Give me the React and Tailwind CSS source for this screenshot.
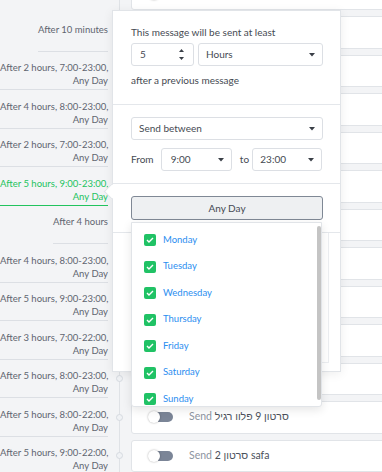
import React from "react";

// only the last two cards show their titles, the rest sit under the popover
const rows = [
  { label: [] },
  { label: ["After 10 minutes"] },
  { label: ["After 2 hours, 7:00-23:00,", "Any Day"] },
  { label: ["After 4 hours, 8:00-23:00,", "Any Day"] },
  { label: ["After 2 hours, 7:00-23:00,", "Any Day"] },
  { label: ["After 5 hours, 9:00-23:00,", "Any Day"], active: true },
  { label: ["After 4 hours"] },
  { label: ["After 4 hours, 8:00-23:00,", "Any Day"] },
  { label: ["After 5 hours, 9:00-23:00,", "Any Day"] },
  { label: ["After 3 hours, 7:00-22:00,", "Any Day"] },
  { label: ["After 5 hours, 8:00-23:00,", "Any Day"] },
  { label: ["After 5 hours, 8:00-22:00,", "Any Day"], title: "סרטון 9 פלוו רגיל" },
  { label: ["After 5 hours, 9:00-22:00,", "Any Day"], title: "סרטון 2 safa" },
];

const days = ["Monday", "Tuesday", "Wednesday", "Thursday", "Friday", "Saturday", "Sunday"];

const Caret = () => (
  <svg width="6" height="4" viewBox="0 0 6 4" className="shrink-0">
    <path d="M0 0h6L3 3.5z" fill="#3a3f47" />
  </svg>
);

const Select = ({ value, className }) => (
  <div
    className={`flex h-[23px] items-center justify-between rounded-[3px] border border-[#dcdfe4] bg-white pl-[7px] pr-[7px] ${className}`}
  >
    <span>{value}</span>
    <Caret />
  </div>
);

const Toggle = () => (
  <div className="relative h-[12px] w-[25px]">
    <div className="absolute left-[4px] top-[1px] h-[10px] w-[21px] rounded-full bg-[#7b8597]" />
    <div className="absolute left-0 top-0 h-[12px] w-[12px] rounded-full bg-white shadow-[0_0_2px_rgba(0,0,0,0.35)]" />
  </div>
);

const Row = ({ label, title, active }) => {
  const twoLines = label.length > 1;
  return (
    <div className="flex h-[38.5px]">
      <div className="flex w-[110px] shrink-0 justify-end pr-[2px] pt-[9.5px]">
        {label.length > 0 && (
          <div
            className={`whitespace-nowrap border-b pb-[2px] text-right text-[9.5px] leading-[13px] ${
              twoLines ? "w-full" : ""
            } ${active ? "border-[#22c35e] text-[#22c35e]" : "border-[#dcdfe4] text-[#5f6570]"}`}
          >
            {label.map((l, i) => (
              <div key={i}>{l}</div>
            ))}
          </div>
        )}
      </div>
      <div className="relative flex w-[19px] shrink-0 items-center justify-center">
        <div className="absolute inset-y-0 left-[9px] w-px bg-[#dfe2e6]" />
        <div className="relative h-[7px] w-[7px] rounded-full border border-[#d6dae0] bg-[#f0f2f5]" />
      </div>
      <div className="py-[3px] pl-[2px]">
        <div className="flex h-full w-[290px] items-center gap-[16px] rounded-[3px] border border-[#e1e4e8] bg-white pl-[16px]">
          <Toggle />
          {title && (
            <div className="whitespace-nowrap text-[10.5px]">
              <span className="text-[#8d94a0]">Send</span>{" "}
              <span className="text-[#4a505a]">{title}</span>
            </div>
          )}
        </div>
      </div>
    </div>
  );
};

export default function App() {
  return (
    <div className="relative h-[472px] w-[382px] overflow-hidden bg-[#f3f4f6] font-['Lato',sans-serif]">
      <div className="-mt-[25.5px]">
        {rows.map((r, i) => (
          <Row key={i} {...r} />
        ))}
      </div>

      {/* popover */}
      <div className="absolute left-[112px] top-[10px] flex h-[362px] w-[229px] flex-col border border-[#e1e4e8] bg-white text-[10px] text-[#454a52] shadow-[0_2px_10px_rgba(0,0,0,0.07)]">
        <div className="absolute -left-[7px] top-[175px] h-[11px] w-[11px] rotate-45 border-b border-l border-[#e1e4e8] bg-white" />
        <div className="relative border-b border-[#e4e7eb] pb-[17px] pl-[18px] pr-[17px] pt-[14px]">
          <div className="leading-[14px]">This message will be sent at least</div>
          <div className="mt-[4px] flex gap-[4px]">
            <div className="flex h-[23px] w-[63px] items-center justify-between rounded-[3px] border border-[#dcdfe4] pl-[8px] pr-[9px]">
              <span>5</span>
              <div className="flex flex-col gap-[5px]">
                <svg width="5" height="3" viewBox="0 0 5 3">
                  <path d="M0 3h5L2.5 0z" fill="#3a3f47" />
                </svg>
                <svg width="5" height="3" viewBox="0 0 5 3">
                  <path d="M0 0h5L2.5 3z" fill="#3a3f47" />
                </svg>
              </div>
            </div>
            <Select value="Hours" className="flex-1" />
          </div>
          <div className="mt-[7px] leading-[14px]">after a previous message</div>
        </div>

        <div className="border-b border-[#e4e7eb] pb-[12px] pl-[18px] pr-[17px] pt-[12px]">
          <Select value="Send between" />
          <div className="mt-[8px] flex items-center">
            <span className="w-[29.7px]">From</span>
            <Select value="9:00" className="w-[71px] pl-[9px]" />
            <span className="w-[20.6px] pl-[5px] text-center">to</span>
            <Select value="23:00" className="w-[70px]" />
          </div>
        </div>

        <div className="border-b border-[#e4e7eb] pb-[12px] pl-[18px] pr-[17px] pt-[12px]">
          <div className="flex h-[24px] items-center justify-center rounded-[3px] border border-[#7f8895] bg-[#eef0f2] text-[#454a52]">
            Any Day
          </div>
        </div>

        <div className="flex flex-1 pb-[8px] pl-[18px] pr-[11px]">
          <div className="flex-1 border-x border-b border-[#eceef1]" />
        </div>
      </div>

      {/* day dropdown */}
      <div className="absolute left-[131px] top-[222px] h-[185px] w-[191px] overflow-hidden rounded-b-[3px] border border-[#e1e4e8] bg-white pt-[3.75px] shadow-[0_3px_10px_rgba(0,0,0,0.1)]">
        {days.map((d) => (
          <div key={d} className="flex h-[26.5px] items-center gap-[7px] pl-[12px]">
            <div className="flex h-[12px] w-[12px] items-center justify-center rounded-[2px] bg-[#20c265]">
              <svg width="8" height="6" viewBox="0 0 8 6">
                <path d="M1 3l2 2 4-4" stroke="white" strokeWidth="1.4" fill="none" />
              </svg>
            </div>
            <span className="text-[9.5px] text-[#2b8ef0]">{d}</span>
          </div>
        ))}
        <div className="absolute left-[185px] top-[3px] h-[174px] w-[4px] rounded-full bg-[#c4c4c4]" />
      </div>
    </div>
  );
}
